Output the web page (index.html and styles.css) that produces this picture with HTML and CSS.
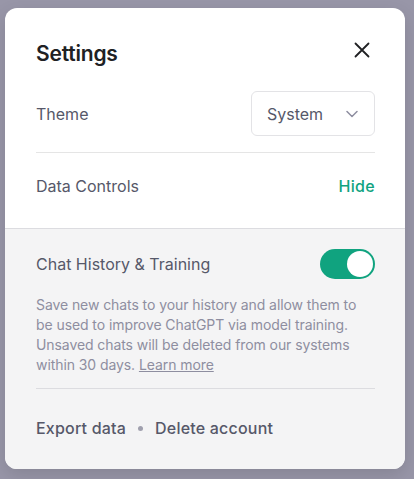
FILE: index.html
```html
<!DOCTYPE html>
<html lang="en">
<head>
<meta charset="utf-8">
<title>Settings</title>
<link rel="stylesheet" href="styles.css">
</head>
<body>
<div class="card">
  <div class="top">
    <div class="header">
      <h2 class="title">Settings</h2>
      <button class="close" aria-label="Close">
        <svg width="16" height="16" viewBox="0 0 16 16" fill="none" stroke="#202123" stroke-width="1.8" stroke-linecap="round"><path d="M1.5 1.5L14.5 14.5M14.5 1.5L1.5 14.5"/></svg>
      </button>
    </div>
    <div class="row theme-row">
      <span class="label">Theme</span>
      <div class="select">
        <span>System</span>
        <svg width="12" height="8" viewBox="0 0 12 8" fill="none" stroke="#8e8ea0" stroke-width="1.5" stroke-linecap="round" stroke-linejoin="round"><path d="M1 1.5L6 6.5L11 1.5"/></svg>
      </div>
    </div>
    <div class="row data-row">
      <span class="label">Data Controls</span>
      <span class="hide">Hide</span>
    </div>
  </div>
  <div class="bottom">
    <div class="row history-row">
      <span class="label">Chat History &amp; Training</span>
      <span class="toggle"><span class="knob"></span></span>
    </div>
    <p class="desc">Save new chats to your history and allow them to be used to improve ChatGPT via model training. Unsaved chats will be deleted from our systems within 30 days. <span class="learn">Learn more</span></p>
    <div class="actions">
      <span class="action">Export data</span>
      <span class="dot"></span>
      <span class="action">Delete account</span>
    </div>
  </div>
</div>
</body>
</html>
```
FILE: styles.css
```css
* { box-sizing: border-box; }
html, body { margin: 0; padding: 0; }
body {
  background: #9896a8;
  font-family: Inter, "Noto Sans", sans-serif;
  width: 414px;
  height: 479px;
  overflow: hidden;
}
.card {
  margin: 8px 0 0 5px;
  width: 400px;
  height: 461px;
  background: #fff;
  border-radius: 12px;
  overflow: hidden;
  box-shadow: 0 6px 18px rgba(0,0,0,0.12);
  display: flex;
  flex-direction: column;
}
.top { padding: 32px 30px 0 31px; }
.header {
  display: flex;
  align-items: center;
  justify-content: space-between;
}
.title {
  margin: 0;
  font-size: 21px;
  line-height: 28px;
  font-weight: 600;
  color: #202123;
  letter-spacing: -0.2px;
}
.close {
  border: 0;
  background: none;
  padding: 0;
  margin: 0 5px 8px 0;
  width: 16px;
  height: 16px;
  display: flex;
}
.row {
  display: flex;
  align-items: center;
  justify-content: space-between;
}
.label {
  font-size: 16px;
  line-height: 24px;
  color: #565869;
}
.theme-row {
  margin-top: 23px;
  padding-bottom: 16px;
  border-bottom: 1px solid #e5e5e5;
}
.select {
  width: 124px;
  height: 45px;
  border: 1px solid #e3e3e6;
  border-radius: 6px;
  display: flex;
  align-items: center;
  justify-content: space-between;
  padding: 0 16px 0 15px;
  font-size: 16px;
  color: #565869;
}
.data-row {
  padding: 21px 0 30px;
}
.hide {
  font-size: 16px;
  line-height: 24px;
  color: #10a37f;
  font-weight: 500;
  letter-spacing: 0.3px;
}
.bottom {
  flex: 1;
  background: #f4f4f5;
  border-top: 1px solid #dcdce0;
  padding: 20px 30px 0 31px;
}
.history-row .label { line-height: 30px; }
.toggle {
  width: 55px;
  height: 30px;
  border-radius: 15px;
  background: #10a37f;
  display: flex;
  align-items: center;
  justify-content: flex-end;
  padding-right: 2px;
}
.knob {
  width: 26px;
  height: 26px;
  border-radius: 50%;
  background: #fff;
}
.desc {
  margin: 16px 0 0;
  font-size: 14px;
  line-height: 20px;
  color: #8e8ea0;
  letter-spacing: -0.08px;
  padding-bottom: 13px;
  border-bottom: 1px solid #dcdce0;
}
.learn {
  text-decoration: underline;
  color: #8e8ea0;
}
.actions {
  display: flex;
  align-items: center;
  margin-top: 27px;
  font-size: 16px;
  line-height: 24px;
  color: #565869;
  font-weight: 500;
  letter-spacing: 0.2px;
}
.dot {
  width: 5px;
  height: 5px;
  border-radius: 50%;
  background: #a0a0ae;
  margin: 0 12px;
}
```
